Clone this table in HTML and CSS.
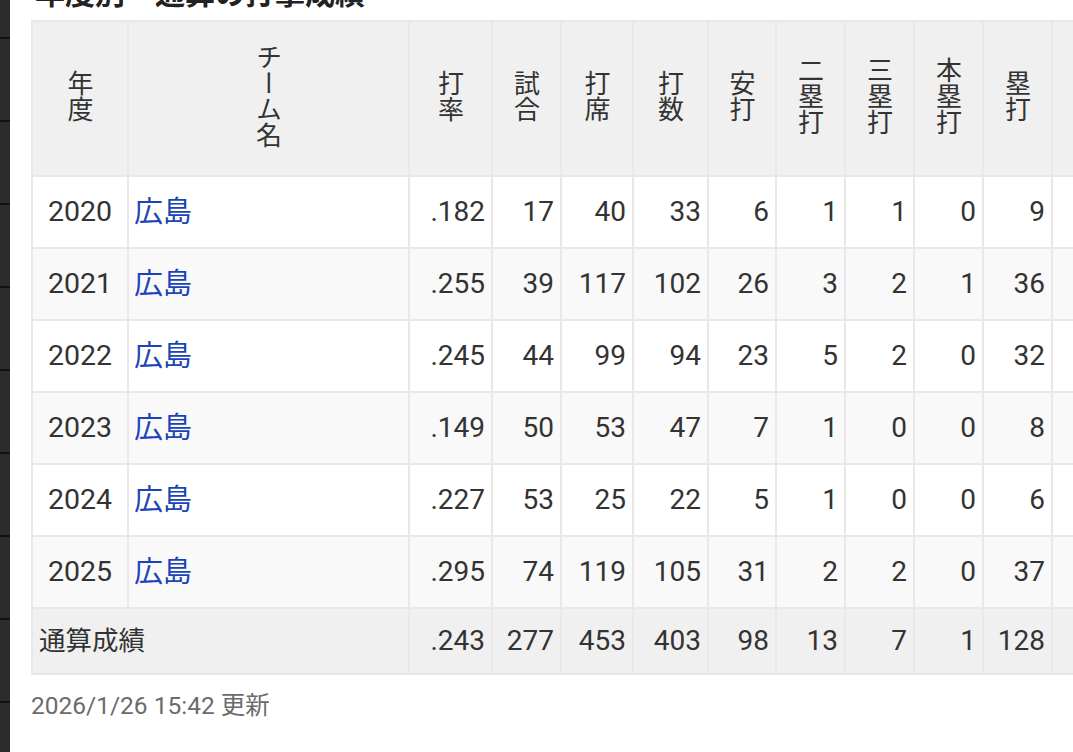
FILE: index.html
```html
<!DOCTYPE html>
<html lang="ja">
<head>
<meta charset="utf-8">
<title>年度別・通算の打撃成績</title>
<link rel="stylesheet" href="styles.css">
</head>
<body>
<div class="app">
  <div class="rail"></div>
  <main class="main">
    <h2 class="title">年度別・通算の打撃成績</h2>
    <div class="table-wrap">
      <table class="stats">
        <colgroup>
          <col class="c-year"><col class="c-team"><col class="c-avg"><col class="c-g"><col class="c-pa"><col class="c-ab"><col class="c-h"><col class="c-2b"><col class="c-3b"><col class="c-hr"><col class="c-tb"><col class="c-x"><col class="c-x"><col class="c-x"><col class="c-x">
        </colgroup>
        <thead>
          <tr>
            <th><span class="vt">年度</span></th>
            <th><span class="vt">チーム名</span></th>
            <th><span class="vt">打率</span></th>
            <th><span class="vt">試合</span></th>
            <th><span class="vt">打席</span></th>
            <th><span class="vt">打数</span></th>
            <th><span class="vt">安打</span></th>
            <th><span class="vt">二塁打</span></th>
            <th><span class="vt">三塁打</span></th>
            <th><span class="vt">本塁打</span></th>
            <th><span class="vt">塁打</span></th>
            <th><span class="vt">打点</span></th>
            <th><span class="vt">得点</span></th>
            <th><span class="vt">三振</span></th>
            <th><span class="vt">四球</span></th>
          </tr>
        </thead>
        <tbody>
          <tr><td class="year">2020</td><td class="team"><a href="#">広島</a></td><td>.182</td><td>17</td><td>40</td><td>33</td><td>6</td><td>1</td><td>1</td><td>0</td><td>9</td><td>2</td><td>3</td><td>8</td><td>5</td></tr>
          <tr><td class="year">2021</td><td class="team"><a href="#">広島</a></td><td>.255</td><td>39</td><td>117</td><td>102</td><td>26</td><td>3</td><td>2</td><td>1</td><td>36</td><td>10</td><td>11</td><td>20</td><td>12</td></tr>
          <tr><td class="year">2022</td><td class="team"><a href="#">広島</a></td><td>.245</td><td>44</td><td>99</td><td>94</td><td>23</td><td>5</td><td>2</td><td>0</td><td>32</td><td>6</td><td>9</td><td>18</td><td>4</td></tr>
          <tr><td class="year">2023</td><td class="team"><a href="#">広島</a></td><td>.149</td><td>50</td><td>53</td><td>47</td><td>7</td><td>1</td><td>0</td><td>0</td><td>8</td><td>3</td><td>5</td><td>12</td><td>4</td></tr>
          <tr><td class="year">2024</td><td class="team"><a href="#">広島</a></td><td>.227</td><td>53</td><td>25</td><td>22</td><td>5</td><td>1</td><td>0</td><td>0</td><td>6</td><td>1</td><td>4</td><td>6</td><td>2</td></tr>
          <tr><td class="year">2025</td><td class="team"><a href="#">広島</a></td><td>.295</td><td>74</td><td>119</td><td>105</td><td>31</td><td>2</td><td>2</td><td>0</td><td>37</td><td>9</td><td>14</td><td>22</td><td>10</td></tr>
          <tr class="total"><td class="total-label" colspan="2">通算成績</td><td>.243</td><td>277</td><td>453</td><td>403</td><td>98</td><td>13</td><td>7</td><td>1</td><td>128</td><td>31</td><td>46</td><td>86</td><td>37</td></tr>
        </tbody>
      </table>
    </div>
    <p class="updated">2026/1/26 15:42 更新</p>
  </main>
</div>
</body>
</html>
```

FILE: styles.css
```css
html, body {
  margin: 0;
  padding: 0;
  background: #ffffff;
  width: 1073px;
  height: 752px;
  overflow: hidden;
}

body {
  font-family: Roboto, "Noto Sans CJK JP", sans-serif;
  color: #333333;
}

.app {
  display: flex;
  height: 752px;
}

.rail {
  flex: 0 0 10px;
  background-color: #2c2c2c;
  background-image: repeating-linear-gradient(to bottom, #2c2c2c 0 81px, #111111 81px 83px);
  background-position: 0 -44px;
}

.main {
  flex: 1;
  min-width: 0;
  padding-left: 21px;
  overflow: hidden;
}

.title {
  font-family: "Noto Sans CJK JP", sans-serif;
  font-size: 30px;
  line-height: 30px;
  font-weight: 700;
  color: #222222;
  margin: -24px 0 14px 4px;
  white-space: nowrap;
}

.table-wrap {
  overflow: hidden;
  width: 1042px;
}

.stats {
  border-collapse: collapse;
  table-layout: fixed;
  width: 1284px;
}

.c-year { width: 96px; }
.c-team { width: 281px; }
.c-avg { width: 83px; }
.c-g { width: 69px; }
.c-pa { width: 72px; }
.c-ab { width: 75px; }
.c-h { width: 68px; }
.c-2b { width: 69px; }
.c-3b { width: 69px; }
.c-hr { width: 69px; }
.c-tb { width: 69px; }
.c-x { width: 66px; }

.stats th,
.stats td {
  border: 2px solid #e8e8e8;
}

.stats th {
  background: #f0f0f0;
  height: 153px;
  padding: 0;
  font-weight: 400;
  font-size: 26px;
  color: #333333;
  text-align: center;
  vertical-align: middle;
}

.vt {
  display: inline-block;
  writing-mode: vertical-rl;
  text-orientation: upright;
  line-height: 26px;
  font-family: "Noto Sans CJK JP", sans-serif;
}

.stats td {
  height: 70px;
  padding: 0 6px;
  font-size: 28px;
  line-height: 34px;
  text-align: right;
  vertical-align: middle;
  white-space: nowrap;
}

.stats tbody tr:nth-child(even) td {
  background: #f9f9f9;
}

.stats td.year {
  text-align: center;
  padding: 0;
  font-size: 28.5px;
}

.stats td.team {
  text-align: left;
  padding-left: 5px;
  font-size: 29px;
}

.team a {
  color: #1a44b8;
  text-decoration: none;
}

.stats tr.total td {
  background: #f0f0f0;
  height: 64px;
}

.stats td.total-label {
  text-align: left;
  padding-left: 6px;
  font-size: 26.5px;
}

.updated {
  margin: 16px 0 0;
  font-size: 24.5px;
  line-height: 30px;
  color: #6b6b6b;
}
```
